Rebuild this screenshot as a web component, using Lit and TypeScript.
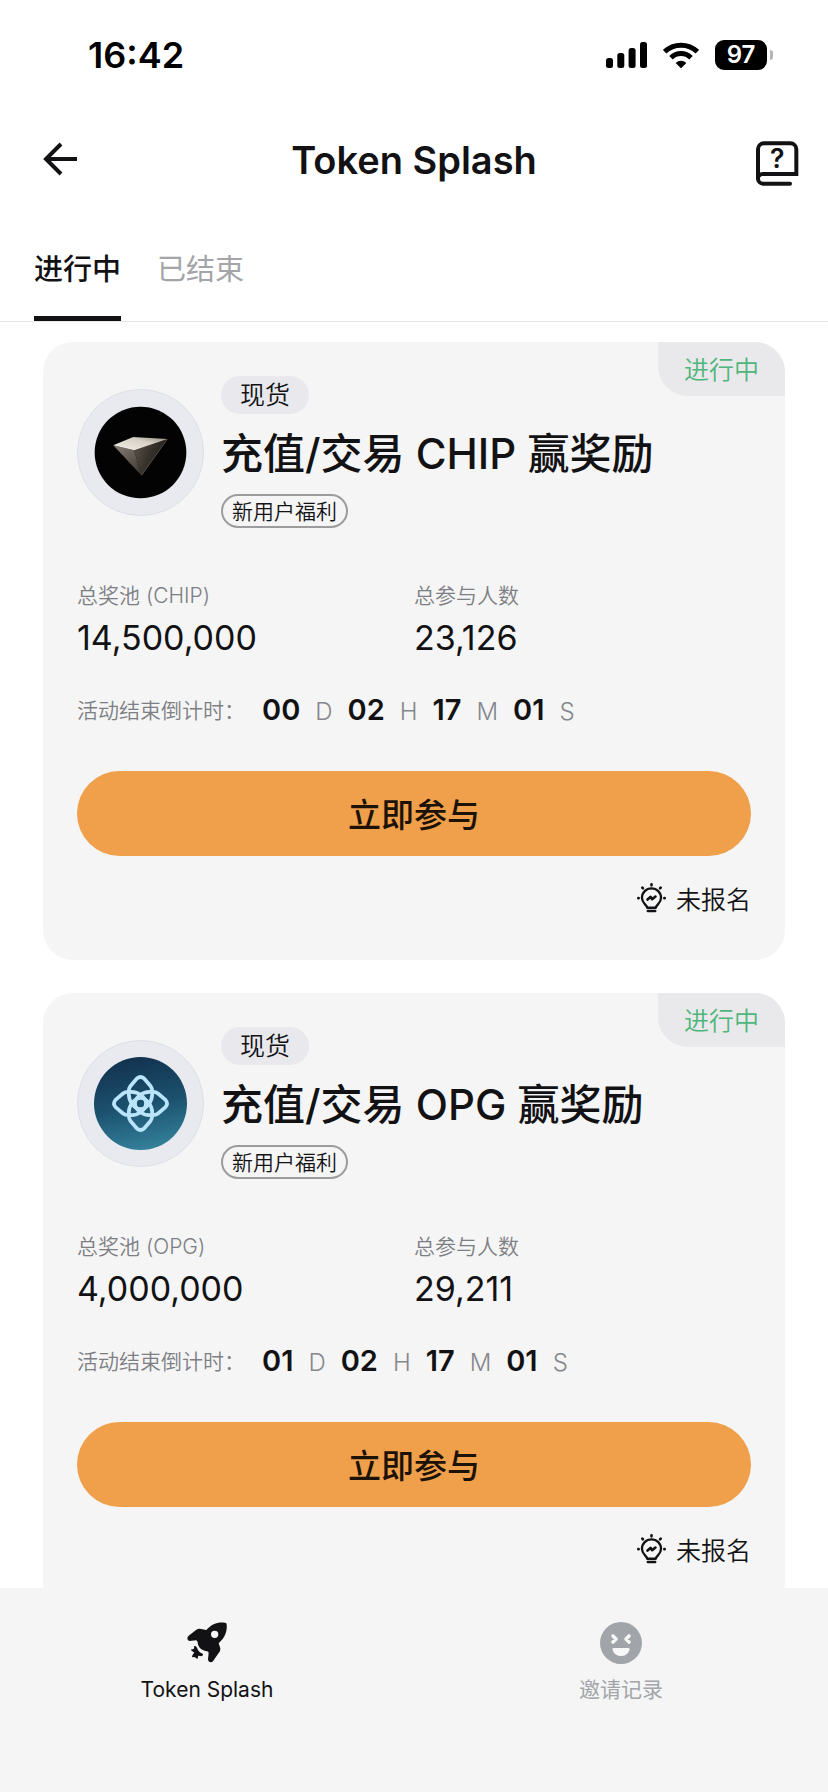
import { LitElement, html, css, svg } from "lit"
import { customElement, property, state } from "lit/decorators.js"
import { classMap } from "lit/directives/class-map.js"

interface Campaign {
  token: string
  pool: string
  participants: string
  countdown: string[]
}

const CAMPAIGNS: Campaign[] = [
  { token: "CHIP", pool: "14,500,000", participants: "23,126", countdown: ["00", "02", "17", "01"] },
  { token: "OPG", pool: "4,000,000", participants: "29,211", countdown: ["01", "02", "17", "01"] },
]

const UNITS = ["D", "H", "M", "S"]

const chipLogo = svg`
  <svg class="logo" viewBox="0 0 280 280" aria-hidden="true">
    <defs>
      <linearGradient id="top" x1="0" y1="1" x2="1" y2="0">
        <stop offset="0" stop-color="#f5f1ea" />
        <stop offset="0.6" stop-color="#d8d1c6" />
        <stop offset="1" stop-color="#8f877c" />
      </linearGradient>
      <linearGradient id="left" x1="0" y1="0" x2="1" y2="1">
        <stop offset="0" stop-color="#8a8278" />
        <stop offset="1" stop-color="#39342f" />
      </linearGradient>
      <linearGradient id="right" x1="0" y1="0" x2="1" y2="0.4">
        <stop offset="0" stop-color="#5d554c" />
        <stop offset="0.5" stop-color="#3a342e" />
        <stop offset="1" stop-color="#1c1916" />
      </linearGradient>
    </defs>
    <circle cx="140" cy="140" r="138" fill="#030303" />
    <path d="M58 118L121 133L143 209Z" fill="url(#left)" />
    <path d="M121 133L221 99L143 209Z" fill="url(#right)" />
    <path d="M58 118L118 93L221 99L121 133Z" fill="url(#top)" />
    <path d="M221 99L143 209" stroke="#6f675e" stroke-width="2" />
  </svg>
`

const petal =
  "M-3.6 -25Q0 -28 3.6 -25L10 -17.5Q11.7 -15.5 11.7 -12V-9C11.7 -2 6 5.5 0 5.5C-6 5.5 -11.7 -2 -11.7 -9V-12Q-11.7 -15.5 -10 -17.5Z"

const opgLogo = svg`
  <svg class="logo" viewBox="-46.5 -46.5 93 93" aria-hidden="true">
    <defs>
      <linearGradient id="sea" x1="0.4" y1="0" x2="0.6" y2="1">
        <stop offset="0" stop-color="#12324f" />
        <stop offset="0.5" stop-color="#1b506d" />
        <stop offset="1" stop-color="#34819b" />
      </linearGradient>
    </defs>
    <circle r="46.5" fill="url(#sea)" />
    <g fill="none" stroke="#b9e4fb" stroke-width="3.7" stroke-linejoin="round">
      ${[0, 90, 180, 270].map((deg) => svg`<path d=${petal} transform="rotate(${deg})" />`)}
    </g>
  </svg>
`

@customElement("token-card")
export class TokenCard extends LitElement {
  @property({ attribute: false }) campaign!: Campaign

  static styles = css`
    :host {
      display: block;
      position: relative;
      overflow: hidden;
      padding: 34px 34px 43px;
      border-radius: 30px;
      background: #f5f5f5;
      color: #121214;
    }

    .state {
      position: absolute;
      top: 0;
      right: 0;
      padding: 2px 26px 0;
      border-bottom-left-radius: 30px;
      background: #e9e9eb;
      color: #4fb57c;
      font-size: 25px;
      font-weight: 350;
      line-height: 52px;
    }

    .top {
      display: flex;
      align-items: center;
      gap: 17px;
    }

    .avatar {
      box-sizing: border-box;
      flex: none;
      display: grid;
      place-items: center;
      width: 127px;
      height: 127px;
      border: 1px solid #dcdfe5;
      border-radius: 50%;
      background: #e8eaef;
    }

    .logo {
      display: block;
      width: 93px;
      height: 93px;
    }

    .heading {
      display: flex;
      flex-direction: column;
      align-items: flex-start;
      gap: 16px;
    }

    .kind {
      padding: 0 19px;
      border-radius: 20px;
      background: #e9e9ed;
      font-size: 25px;
      font-weight: 350;
      line-height: 38px;
    }

    h2 {
      margin: 0;
      font-size: 42px;
      font-weight: 500;
      line-height: 48px;
    }

    .perk {
      padding: 2px 9px 0;
      border: 2px solid #9c9c9e;
      border-radius: 18px;
      font-size: 21px;
      font-weight: 350;
      line-height: 28px;
    }

    .figures {
      display: grid;
      grid-template-columns: 1fr 1fr;
      margin: 53px 0 34px;
    }

    dt,
    .label {
      color: #7d7f84;
      font-size: 21px;
      font-weight: 350;
      line-height: 30px;
    }

    dd {
      margin: 7px 0 0;
      font-size: 34px;
      line-height: 40px;
    }

    .countdown {
      display: flex;
      align-items: center;
      gap: 17px;
      line-height: 36px;
    }

    .clock {
      display: flex;
      align-items: baseline;
      gap: 15px;
    }

    .count {
      font-size: 29px;
      font-weight: 600;
    }

    .unit {
      color: #85878c;
      font-size: 24px;
      font-weight: 350;
    }

    .join {
      display: block;
      width: 100%;
      margin: 41px 0 27px;
      padding: 4px 0 0;
      border: 0;
      border-radius: 43px;
      background: #f0a04b;
      color: #1c1206;
      font: inherit;
      font-size: 33px;
      font-weight: 500;
      line-height: 81px;
    }

    .signup {
      display: flex;
      justify-content: flex-end;
      align-items: center;
      gap: 10px;
      font-size: 25px;
      font-weight: 350;
      line-height: 34px;
    }

    .bulb {
      width: 29px;
      height: 34px;
    }
  `

  render() {
    const { token, pool, participants, countdown } = this.campaign
    return html`
      <span class="state">进行中</span>
      <div class="top">
        <div class="avatar">${token === "CHIP" ? chipLogo : opgLogo}</div>
        <div class="heading">
          <span class="kind">现货</span>
          <h2>充值/交易 ${token} 赢奖励</h2>
          <span class="perk">新用户福利</span>
        </div>
      </div>
      <dl class="figures">
        <div>
          <dt>总奖池 (${token})</dt>
          <dd>${pool}</dd>
        </div>
        <div>
          <dt>总参与人数</dt>
          <dd>${participants}</dd>
        </div>
      </dl>
      <div class="countdown">
        <span class="label">活动结束倒计时：</span>
        <div class="clock">
          ${countdown.map(
            (value, i) => html`<span class="count">${value}</span><span class="unit">${UNITS[i]}</span>`
          )}
        </div>
      </div>
      <button class="join" type="button">立即参与</button>
      <div class="signup">
        <svg class="bulb" viewBox="0 0 88 103" fill="none" stroke="#121214" stroke-width="7" stroke-linecap="round" stroke-linejoin="round" aria-hidden="true">
          <path d="M31 75C29 65 15 62 15 45A29 29 0 0 1 73 45C73 62 59 65 57 75Z" />
          <path d="M33 85H55" stroke-width="8" />
          <path d="M32 50L41 42L46 49L56 41" stroke-width="8" />
          <path d="M44 4V7M16 14L18 16M72 14L70 16M4 46H5M83 46H84" stroke-width="8" />
        </svg>
        <span>未报名</span>
      </div>
    `
  }
}

@customElement("app-root")
export class AppRoot extends LitElement {
  @state() private tab = "进行中"

  static styles = css`
    :host {
      display: flex;
      flex-direction: column;
      height: 100vh;
      background: #fff;
      color: #121214;
      font-family: Inter, "Noto Sans CJK SC", sans-serif;
    }

    button {
      padding: 0;
      border: 0;
      background: none;
      color: inherit;
      font: inherit;
    }

    svg {
      display: block;
    }

    .status-bar {
      display: flex;
      align-items: center;
      justify-content: space-between;
      padding: 33px 55px 33px 88px;
      color: #000;
    }

    .time {
      font-size: 36px;
      font-weight: 600;
      line-height: 44px;
    }

    .indicators {
      display: flex;
      align-items: center;
      gap: 16px;
    }

    .signal {
      width: 41px;
      height: 26px;
    }

    .wifi {
      width: 36px;
      height: 26px;
    }

    .battery {
      display: flex;
      align-items: center;
      gap: 3px;
    }

    .level {
      width: 52px;
      border-radius: 9px;
      background: #000;
      color: #fff;
      font-size: 24px;
      font-weight: 600;
      line-height: 30px;
      text-align: center;
    }

    .nub {
      width: 3px;
      height: 10px;
      border-radius: 0 3px 3px 0;
      background: #b5b5b5;
    }

    .title-bar {
      display: grid;
      grid-template-columns: 1fr auto 1fr;
      align-items: center;
      height: 100px;
      padding: 0 28px;
    }

    h1 {
      margin: 0;
      font-size: 38px;
      font-weight: 600;
      line-height: 44px;
    }

    .back svg {
      width: 64px;
      height: 48px;
    }

    .help {
      justify-self: end;
    }

    .help svg {
      width: 44px;
      height: 52px;
    }

    .tabs {
      display: flex;
      gap: 36px;
      padding: 0 34px;
      border-bottom: 1px solid #e6e6e8;
    }

    .tab {
      padding: 38px 0 24px;
      border-bottom: 5px solid transparent;
      color: #a3a5a9;
      font-size: 29px;
      font-weight: 400;
      line-height: 44px;
    }

    .tab.active {
      border-bottom-color: #121214;
      color: #121214;
      font-weight: 500;
    }

    main {
      flex: 1;
      min-height: 0;
      overflow-y: auto;
      scrollbar-width: none;
      display: flex;
      flex-direction: column;
      gap: 33px;
      padding: 20px 43px;
    }

    token-card {
      flex: none;
    }

    nav {
      display: grid;
      grid-template-columns: 1fr 1fr;
      padding: 33px 0 86px;
      background: #f5f5f5;
    }

    .nav-item {
      display: flex;
      flex-direction: column;
      align-items: center;
      gap: 9px;
      color: #a3a5a9;
      font-size: 21px;
      font-weight: 400;
      line-height: 32px;
    }

    .nav-item svg {
      width: 44px;
      height: 44px;
    }

    .nav-item.active {
      color: #121214;
    }
  `

  render() {
    return html`
      <div class="status-bar">
        <span class="time">16:42</span>
        <div class="indicators">
          <svg class="signal" viewBox="0 0 41 26" aria-hidden="true">
            <rect x="0" y="16" width="7" height="10" rx="2.5" />
            <rect x="11.3" y="11" width="7" height="15" rx="2.5" />
            <rect x="22.6" y="6" width="7" height="20" rx="2.5" />
            <rect x="34" y="0" width="7" height="26" rx="2.5" />
          </svg>
          <svg class="wifi" viewBox="0 0 106 78" aria-hidden="true">
            <g fill="none" stroke="#000" stroke-width="15">
              <path d="M4 29A71 71 0 0 1 102 29" />
              <path d="M23 47A43 43 0 0 1 83 47" />
            </g>
            <path d="M53 79L37 63A23 23 0 0 1 69 63Z" />
          </svg>
          <div class="battery">
            <span class="level">97</span>
            <span class="nub"></span>
          </div>
        </div>
      </div>

      <header class="title-bar">
        <button class="back" type="button" aria-label="返回">
          <svg viewBox="0 0 64 48" fill="none" stroke="#121214" stroke-width="4">
            <path d="M49 23H17M33 8L18 23L33 38" />
          </svg>
        </button>
        <h1>Token Splash</h1>
        <button class="help" type="button" aria-label="帮助">
          <svg viewBox="0 -22 132 156" fill="none" stroke="#121214" stroke-width="12" stroke-linecap="round">
            <path d="M6 112V24A18 18 0 0 1 24 6H103A18 18 0 0 1 121 24V98H20A14 14 0 0 0 6 112A15 15 0 0 0 21 127H102" />
            <text x="64" y="79" text-anchor="middle" font-size="80" font-weight="600" fill="#121214" stroke="none">?</text>
          </svg>
        </button>
      </header>

      <div class="tabs" role="tablist">
        ${["进行中", "已结束"].map(
          (name) => html`
            <button
              class=${classMap({ tab: true, active: this.tab === name })}
              type="button"
              role="tab"
              aria-selected=${this.tab === name}
              @click=${() => (this.tab = name)}
            >${name}</button>
          `
        )}
      </div>

      <main>
        ${CAMPAIGNS.map((campaign) => html`<token-card .campaign=${campaign}></token-card>`)}
      </main>

      <nav>
        <button class="nav-item active" type="button">
          <svg viewBox="-4 -2 132 132" fill="#121214" aria-hidden="true">
            <path fill-rule="evenodd" d="M60 25C76 6 96 0 116 3Q121 3 121 8C123 30 116 48 97 65L102 80Q103 88 97 94L81 117Q76 123 70 121Q65 119 65 113L67 93Q66 89 61 89C44 86 35 76 34 62Q34 57 29 56L9 58Q3 56 3 50Q3 45 7 42L30 24Q37 20 44 22ZM96 38A11 11 0 1 0 74 38A11 11 0 1 0 96 38Z" />
            <path d="M23 74Q28 70 32 78C35 87 40 93 49 96Q53 100 46 104L37 102Q33 104 35 109Q33 114 29 109Q24 104 19 107Q15 106 20 98L24 93L14 86Q13 82 21 83Q25 80 23 74Z" />
          </svg>
          <span>Token Splash</span>
        </button>
        <button class="nav-item" type="button">
          <svg viewBox="-1 0 44 44" aria-hidden="true">
            <circle cx="21" cy="22" r="21" fill="#a1a4a9" />
            <path d="M13 15L16 18L13 21M29 15L26 18L29 21" fill="none" stroke="#f7f7f7" stroke-width="3.6" stroke-linecap="round" stroke-linejoin="round" />
            <path d="M13.5 27H28.5Q30 27 29.5 29C28 33 25 35 21 35C17 35 14 33 12.5 29Q12 27 13.5 27Z" fill="#f7f7f7" />
          </svg>
          <span>邀请记录</span>
        </button>
      </nav>
    `
  }
}
